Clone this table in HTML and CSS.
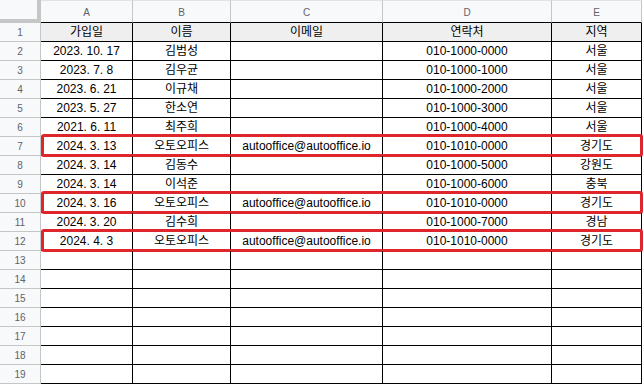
FILE: index.html
```html
<!DOCTYPE html>
<html lang="ko">
<head>
<meta charset="utf-8">
<link rel="stylesheet" href="styles.css">
</head>
<body>
<div class="sheet">
  <div class="row head">
    <div class="corner"></div>
    <div class="col">A</div><div class="col">B</div><div class="col">C</div><div class="col">D</div><div class="col">E</div>
  </div>
  <div class="row titles">
    <div class="num">1</div>
    <div class="cell">가입일</div><div class="cell">이름</div><div class="cell">이메일</div><div class="cell">연락처</div><div class="cell">지역</div>
  </div>
  <div class="row"><div class="num">2</div><div class="cell">2023. 10. 17</div><div class="cell">김범성</div><div class="cell"></div><div class="cell">010-1000-0000</div><div class="cell">서울</div></div>
  <div class="row"><div class="num">3</div><div class="cell">2023. 7. 8</div><div class="cell">김우균</div><div class="cell"></div><div class="cell">010-1000-1000</div><div class="cell">서울</div></div>
  <div class="row"><div class="num">4</div><div class="cell">2023. 6. 21</div><div class="cell">이규채</div><div class="cell"></div><div class="cell">010-1000-2000</div><div class="cell">서울</div></div>
  <div class="row"><div class="num">5</div><div class="cell">2023. 5. 27</div><div class="cell">한소연</div><div class="cell"></div><div class="cell">010-1000-3000</div><div class="cell">서울</div></div>
  <div class="row"><div class="num">6</div><div class="cell">2021. 6. 11</div><div class="cell">최주희</div><div class="cell"></div><div class="cell">010-1000-4000</div><div class="cell">서울</div></div>
  <div class="row hl"><div class="num">7</div><div class="cell">2024. 3. 13</div><div class="cell">오토오피스</div><div class="cell">autooffice@autooffice.io</div><div class="cell">010-1010-0000</div><div class="cell">경기도</div></div>
  <div class="row"><div class="num">8</div><div class="cell">2024. 3. 14</div><div class="cell">김동수</div><div class="cell"></div><div class="cell">010-1000-5000</div><div class="cell">강원도</div></div>
  <div class="row"><div class="num">9</div><div class="cell">2024. 3. 14</div><div class="cell">이석준</div><div class="cell"></div><div class="cell">010-1000-6000</div><div class="cell">충북</div></div>
  <div class="row hl"><div class="num">10</div><div class="cell">2024. 3. 16</div><div class="cell">오토오피스</div><div class="cell">autooffice@autooffice.io</div><div class="cell">010-1010-0000</div><div class="cell">경기도</div></div>
  <div class="row"><div class="num">11</div><div class="cell">2024. 3. 20</div><div class="cell">김수희</div><div class="cell"></div><div class="cell">010-1000-7000</div><div class="cell">경남</div></div>
  <div class="row hl"><div class="num">12</div><div class="cell">2024. 4. 3</div><div class="cell">오토오피스</div><div class="cell">autooffice@autooffice.io</div><div class="cell">010-1010-0000</div><div class="cell">경기도</div></div>
  <div class="row"><div class="num">13</div><div class="cell"></div><div class="cell"></div><div class="cell"></div><div class="cell"></div><div class="cell"></div></div>
  <div class="row"><div class="num">14</div><div class="cell"></div><div class="cell"></div><div class="cell"></div><div class="cell"></div><div class="cell"></div></div>
  <div class="row"><div class="num">15</div><div class="cell"></div><div class="cell"></div><div class="cell"></div><div class="cell"></div><div class="cell"></div></div>
  <div class="row"><div class="num">16</div><div class="cell"></div><div class="cell"></div><div class="cell"></div><div class="cell"></div><div class="cell"></div></div>
  <div class="row"><div class="num">17</div><div class="cell"></div><div class="cell"></div><div class="cell"></div><div class="cell"></div><div class="cell"></div></div>
  <div class="row"><div class="num">18</div><div class="cell"></div><div class="cell"></div><div class="cell"></div><div class="cell"></div><div class="cell"></div></div>
  <div class="row"><div class="num">19</div><div class="cell"></div><div class="cell"></div><div class="cell"></div><div class="cell"></div><div class="cell"></div></div>
</div>
</body>
</html>
```
FILE: styles.css
```css
* { box-sizing: border-box; }
html, body { margin: 0; padding: 0; background: #fff; }
body {
  font-family: "Liberation Sans", Arial, "Noto Sans CJK KR", sans-serif;
  font-size: 12px;
  color: #000;
  width: 644px;
  height: 385px;
  overflow: hidden;
}
.sheet { width: 642px; }
.row {
  position: relative;
  display: grid;
  grid-template-columns: 41px 92px 98px 152px 169px 90px;
  height: 19px;
}
.row.head { height: 23px; }
.corner {
  background: #f8f9fa;
  border-right: 4px solid #c4c7c5;
  border-bottom: 4px solid #c4c7c5;
}
.col {
  background: #f8f9fa;
  border-top: 1px solid #e1e3e1;
  border-right: 1px solid #c4c7c5;
  border-bottom: 1px solid #000;
  color: #5f6368;
  font-size: 10px;
  display: flex;
  align-items: center;
  justify-content: center;
  padding-top: 1px;
}
.num {
  background: #f8f9fa;
  border-right: 1px solid #c4c7c5;
  border-bottom: 1px solid #c4c7c5;
  color: #5f6368;
  font-size: 10px;
  display: flex;
  align-items: center;
  justify-content: center;
}
.cell {
  border-right: 1px solid #000;
  border-bottom: 1px solid #000;
  display: flex;
  align-items: center;
  justify-content: center;
  white-space: nowrap;
  line-height: 18px;
}
.titles .cell { background: #efefef; }
.hl::after {
  content: "";
  position: absolute;
  left: 41px;
  right: -1px;
  top: -3px;
  bottom: -1px;
  border: 3px solid #e0262d;
  border-radius: 3px;
  pointer-events: none;
}
```
